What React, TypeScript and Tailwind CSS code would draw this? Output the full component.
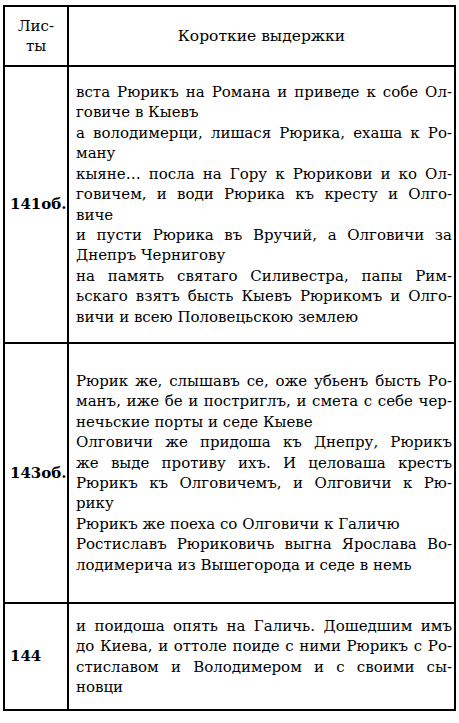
type Line = [string, boolean];

const rows: { label: string; h: string; lines: Line[] }[] = [
  {
    label: '141об.',
    h: 'h-[277px]',
    lines: [
      ['вста Рюрикъ на Романа и приведе к собе Ол-', true],
      ['говиче в Кыевъ', false],
      ['а володимерци, лишася Рюрика, ехаша к Ро-', true],
      ['ману', false],
      ['кыяне… посла на Гору к Рюрикови и ко Ол-', true],
      ['говичем, и води Рюрика къ кресту и Олго-', true],
      ['виче', false],
      ['и пусти Рюрика въ Вручий, а Олговичи за', true],
      ['Днепръ Чернигову', false],
      ['на память святаго Силивестра, папы Рим-', true],
      ['ьскаго взятъ бысть Кыевъ Рюрикомъ и Олго-', true],
      ['вичи и всею Половецьскою землею', false],
    ],
  },
  {
    label: '143об.',
    h: 'h-[260px]',
    lines: [
      ['Рюрик же, слышавъ се, оже убьенъ бысть Ро-', true],
      ['манъ, иже бе и постриглъ, и смета с себе чер-', true],
      ['нечьские порты и седе Кыеве', false],
      ['Олговичи же придоша къ Днепру, Рюрикъ', true],
      ['же выде противу ихъ. И целоваша крестъ', true],
      ['Рюрикъ къ Олговичемъ, и Олговичи к Рю-', true],
      ['рику', false],
      ['Рюрикъ же поеха со Олговичи к Галичю', false],
      ['Ростиславъ Рюриковичь выгна Ярослава Во-', true],
      ['лодимерича из Вышегорода и седе в немь', false],
    ],
  },
  {
    label: '144',
    h: 'h-[107px]',
    lines: [
      ['и поидоша опять на Галичь. Дошедшим имъ', true],
      ['до Киева, и оттоле поиде с ними Рюрикъ с Ро-', true],
      ['стиславом и Володимером и с своими сы-', true],
      ['новци', false],
    ],
  },
];

export default function App() {
  return (
    <div className="min-h-screen bg-white pl-[3px] pt-[5px] font-['DejaVu_Serif',serif] text-[15px] leading-[20.4px] text-black">
      <div className="w-[453px] border-2 border-black">
        <div className="flex h-[58px]">
          <div className="flex w-[64px] shrink-0 flex-col items-center justify-center border-r-2 border-black leading-[20px]">
            <div>Лис-</div>
            <div>ты</div>
          </div>
          <div className="flex min-w-0 flex-1 items-center justify-center text-[15.5px]">Короткие выдержки</div>
        </div>
        {rows.map((row) => (
          <div key={row.label} className={`flex border-t-2 border-black ${row.h}`}>
            <div className="flex w-[64px] shrink-0 items-center border-r-2 border-black pl-[5px] font-bold">
              {row.label}
            </div>
            <div className="flex min-w-0 flex-1 flex-col justify-center pl-[7px] pr-[2px]">
              {row.lines.map(([text, justify], i) => (
                <div
                  key={i}
                  className={
                    justify
                      ? 'whitespace-nowrap text-justify [text-align-last:justify]'
                      : 'whitespace-nowrap'
                  }
                >
                  {text}
                </div>
              ))}
            </div>
          </div>
        ))}
      </div>
    </div>
  );
}
